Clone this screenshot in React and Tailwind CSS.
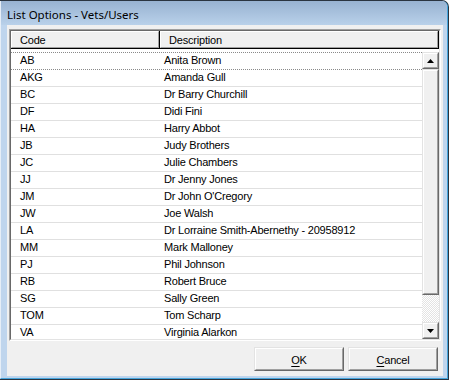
import React from "react";

const rows = [
  ["AB", "Anita Brown"],
  ["AKG", "Amanda Gull"],
  ["BC", "Dr Barry Churchill"],
  ["DF", "Didi Fini"],
  ["HA", "Harry Abbot"],
  ["JB", "Judy Brothers"],
  ["JC", "Julie Chambers"],
  ["JJ", "Dr Jenny Jones"],
  ["JM", "Dr John O'Cregory"],
  ["JW", "Joe Walsh"],
  ["LA", "Dr Lorraine Smith-Abernethy - 20958912"],
  ["MM", "Mark Malloney"],
  ["PJ", "Phil Johnson"],
  ["RB", "Robert Bruce"],
  ["SG", "Sally Green"],
  ["TOM", "Tom Scharp"],
  ["VA", "Virginia Alarkon"],
];

function Raised({ className = "", children }) {
  return (
    <div
      className={
        "border-t border-l border-[#e3e3e3] border-r border-b border-r-[#696969] border-b-[#696969] " +
        className
      }
    >
      <div className="w-full h-full border-t border-l border-white border-r border-b border-r-[#a0a0a0] border-b-[#a0a0a0] bg-[#f0f0f0] flex items-center justify-center">
        {children}
      </div>
    </div>
  );
}

function HeaderCell({ className = "", children }) {
  return (
    <div className={"h-full border-r border-b border-black " + className}>
      <div className="h-full border-t border-l border-white border-r border-b border-r-[#a0a0a0] border-b-[#a0a0a0] bg-[#f0f0f0] pl-[8px] leading-[16px]">
        {children}
      </div>
    </div>
  );
}

export default function App() {
  return (
    <div className="w-[449px] h-[380px] bg-[#2a3440] pt-px pr-px pb-px rounded-tr-[7px] font-['Liberation_Sans',Arial,sans-serif] text-[11px] tracking-[-0.2px] text-black">
      <div className="h-full flex flex-col bg-[#bfd5ed] border-l border-l-[#e6eef7] border-r border-b border-r-[#46a5dc] border-b-[#46a5dc] rounded-tr-[6px] overflow-hidden">
        <div className="h-[24px] shrink-0 bg-gradient-to-b from-[#98b2d1] to-[#b9d1ea] pl-[6px] flex items-center">
          <span className="font-['Noto_Sans',sans-serif] text-[11.5px] tracking-normal leading-[16px] pt-[3px]">
            List Options - Vets/Users
          </span>
        </div>
        <div className="flex-1 ml-[6px] mr-[4px] mb-[2px] bg-[#f0f0f0] flex flex-col pt-[4px] px-[2px]">
          {/* list box */}
          <div className="h-[312px] border-t border-l border-[#a0a0a0] border-r border-b border-r-white border-b-white">
            <div className="h-full border-t border-l border-[#696969] border-r border-b border-r-[#e3e3e3] border-b-[#e3e3e3] bg-white flex flex-col">
              <div className="h-[18px] shrink-0 flex bg-[#f0f0f0]">
                <HeaderCell className="w-[149px]">Code</HeaderCell>
                <HeaderCell className="flex-1">Description</HeaderCell>
              </div>
              <div className="flex-1 flex pt-[3px] min-h-0">
                <div className="flex-1 overflow-hidden">
                  {rows.map(([code, desc], i) => (
                    <div
                      key={code}
                      className={
                        "h-[17px] flex border-t leading-[14px] " +
                        (i < 2 ? "border-dotted border-[#8a8a8a]" : "border-[#e0e0e0]")
                      }
                    >
                      <div className="w-[153px] pl-[9px] shrink-0">{code}</div>
                      <div className="flex-1 whitespace-nowrap">{desc}</div>
                    </div>
                  ))}
                </div>
                <div className="w-[17px] shrink-0 flex flex-col">
                  <Raised className="h-[17px] shrink-0">
                    <svg width="7" height="4" viewBox="0 0 7 4">
                      <path d="M3.5 0 L7 4 L0 4 Z" fill="#000" />
                    </svg>
                  </Raised>
                  <Raised className="h-[226px] shrink-0" />
                  <div className="flex-1 bg-[repeating-conic-gradient(#ffffff_0_25%,#e3e3e3_0_50%)] bg-[length:2px_2px]" />
                  <Raised className="h-[17px] shrink-0">
                    <svg width="7" height="4" viewBox="0 0 7 4">
                      <path d="M0 0 L7 0 L3.5 4 Z" fill="#000" />
                    </svg>
                  </Raised>
                </div>
              </div>
            </div>
          </div>
          {/* buttons */}
          <div className="mt-[6px] flex justify-end gap-[4px] pr-[3px]">
            <Raised className="w-[90px] h-[24px]">
              <span className="leading-[16px] pt-[2px]">
                <span className="underline underline-offset-2">O</span>K
              </span>
            </Raised>
            <Raised className="w-[90px] h-[24px]">
              <span className="leading-[16px] pt-[2px]">
                <span className="underline underline-offset-2">C</span>ancel
              </span>
            </Raised>
          </div>
        </div>
      </div>
    </div>
  );
}
